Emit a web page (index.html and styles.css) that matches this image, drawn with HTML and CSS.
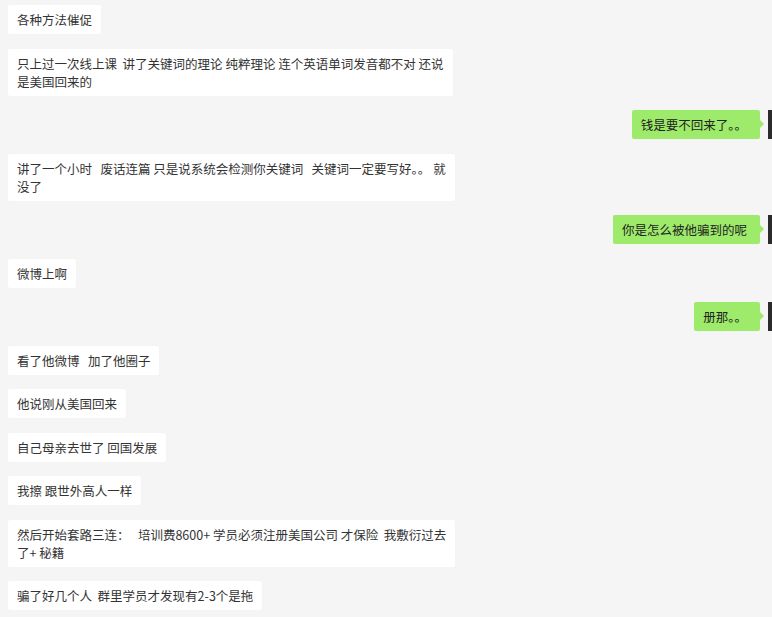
FILE: index.html
```html
<!DOCTYPE html>
<html lang="zh-CN">
<head>
    <meta charset="UTF-8">
    <title>聊天记录</title>
    <link rel="stylesheet" href="styles.css">
</head>
<body>

    <!-- Chat Log -->
    <div class="chat">
        <div class="row left"><div class="bubble">各种方法催促</div></div>
        <div class="row left"><div class="bubble">只上过一次线上课&nbsp; 讲了关键词的理论 纯粹理论 连个英语单词发音都不对 还说<br>是美国回来的</div></div>
        <div class="row right"><div class="bubble">钱是要不回来了。。</div><div class="avatar"></div></div>
        <div class="row left"><div class="bubble">讲了一个小时&nbsp;&nbsp; 废话连篇 只是说系统会检测你关键词&nbsp;&nbsp; 关键词一定要写好。。 就<br>没了</div></div>
        <div class="row right"><div class="bubble">你是怎么被他骗到的呢</div><div class="avatar"></div></div>
        <div class="row left"><div class="bubble">微博上啊</div></div>
        <div class="row right"><div class="bubble">册那。。</div><div class="avatar"></div></div>
        <div class="row left"><div class="bubble">看了他微博&nbsp;&nbsp; 加了他圈子</div></div>
        <div class="row left"><div class="bubble">他说刚从美国回来</div></div>
        <div class="row left"><div class="bubble">自己母亲去世了 回国发展</div></div>
        <div class="row left"><div class="bubble">我擦 跟世外高人一样</div></div>
        <div class="row left"><div class="bubble">然后开始套路三连：&nbsp;&nbsp; 培训费8600+ 学员必须注册美国公司 才保险&nbsp; 我敷衍过去<br>了+ 秘籍</div></div>
        <div class="row left"><div class="bubble">骗了好几个人&nbsp; 群里学员才发现有2-3个是拖</div></div>
    </div>

</body>
</html>
```

FILE: styles.css
```css
/* General Styles */
* {
    margin: 0;
    padding: 0;
    box-sizing: border-box;
}

body {
    font-family: "Noto Sans CJK SC", sans-serif;
    background-color: #f5f5f5;
    color: #333;
    font-size: 12.5px;
    overflow: hidden;
}

/* Chat Log */
.chat {
    display: flex;
    flex-direction: column;
    gap: 14.5px;
    padding: 5px 0 0 8px;
}

.row {
    display: flex;
    align-items: flex-start;
}

.row.right {
    justify-content: flex-end;
    align-items: stretch;
}

.bubble {
    position: relative;
    max-width: 470px;
    padding: 6px 9px 5px;
    line-height: 18px;
    background: #fff;
    border-radius: 2px;
    box-shadow: 0 0 1px rgba(0, 0, 0, 0.04);
}

/* Outgoing Messages */
.right .bubble {
    background: #9eea6a;
    color: #222;
    padding-right: 13px;
    margin-right: 8px;
}

.right .bubble::after {
    content: "";
    position: absolute;
    right: -4px;
    top: 10px;
    border-left: 4px solid #9eea6a;
    border-top: 4px solid transparent;
    border-bottom: 4px solid transparent;
}

.avatar {
    width: 4px;
    background: #2b2b2b;
}
```
